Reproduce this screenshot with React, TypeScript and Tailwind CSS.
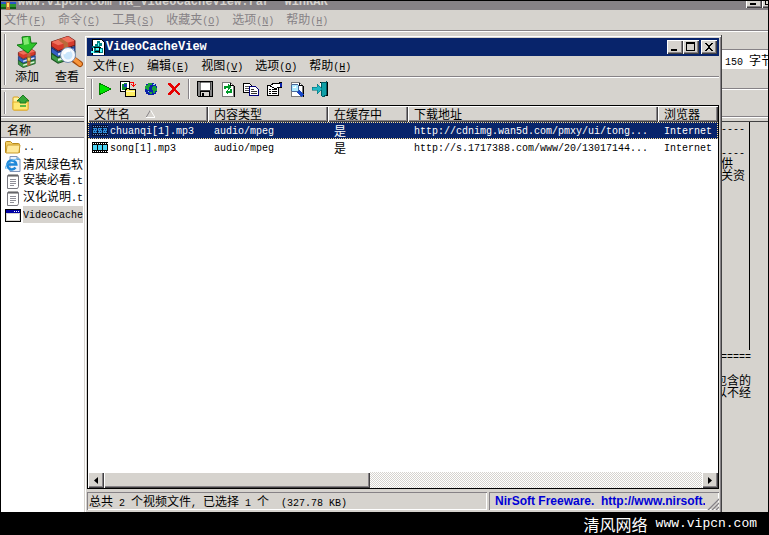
import type { ReactNode } from "react";

const cjk = "font-['Noto_Sans_CJK_SC',sans-serif]";
const mono = "font-['Liberation_Mono',monospace]";

const raised =
  "bg-[#d6d3ce] shadow-[inset_1px_1px_0_#fff,inset_-1px_-1px_0_#424142,inset_-2px_-2px_0_#868286]";
const sunken = "shadow-[inset_1px_1px_0_#868286,inset_-1px_-1px_0_#fff]";

// Latin runs are set half as wide as a Chinese character
function Txt({ children }: { children: string }) {
  const runs = children.match(/[\x00-\x7f]+|[^\x00-\x7f]+/g) ?? [];
  return (
    <span className="whitespace-pre">
      {runs.map((run, i) =>
        run.charCodeAt(0) < 128 ? (
          <span key={i} className={`${mono} text-[10px]`}>
            {run}
          </span>
        ) : (
          <span key={i}>{run}</span>
        )
      )}
    </span>
  );
}

function MenuItem({ label, hotkey }: { label: string; hotkey: string }) {
  return (
    <button className="whitespace-nowrap leading-4">
      {label}
      <span className={`${mono} text-[10px]`}>
        (<u>{hotkey}</u>)
      </span>
    </button>
  );
}

function Icon({ children }: { children: ReactNode }) {
  return (
    <svg className="h-4 w-4 shrink-0" viewBox="0 0 16 16" shapeRendering="crispEdges" aria-hidden="true">
      {children}
    </svg>
  );
}

function AppIcon() {
  return (
    <Icon>
      <path d="M2 0h9l3 3v13H2z" fill="#fff" stroke="#000" />
      <path d="M7 2h3v2h2v3h-2v2h3v5H4V9H2V7h3V5h2z" fill="#008284" />
      <path d="M8 4h1v3H8zM6 9h3v2H6zM10 10h2v3h-2zM1 12h3v2H1z" fill="#5ff" />
      <path d="M4 8h7M9 8v6M5 12h4" stroke="#000" />
    </Icon>
  );
}

function FilmIcon({ selected }: { selected?: boolean }) {
  return (
    <svg className="h-[13px] w-4 shrink-0" viewBox="0 0 16 13" shapeRendering="crispEdges" aria-hidden="true">
      <rect y="1" width="16" height="11" fill={selected ? "#041236" : "#000"} />
      <path d="M1 4h4v5H1zM6 4h4v5H6zM11 4h4v5h-4z" fill={selected ? "#2f8fd8" : "#4ad3f5"} />
      <path d="M1 2.5h15M1 10.5h15" stroke={selected ? "#6f8fd0" : "#fff"} strokeDasharray="1 1" />
      {selected && <path d="M1 5.5h14M2 7.5h13" stroke="#08246b" strokeDasharray="1 1" />}
    </svg>
  );
}

function Books() {
  return (
    <>
      <path d="M3 8L18 3l6 4v4L9 16 3 12z" fill="#d63a2c" stroke="#6f1713" />
      <path d="M3 8L18 3l6 4L9 11z" fill="#f0705c" />
      <path d="M3 13l6 4 15-5v5L9 22l-6-4z" fill="#3560c2" stroke="#1b2f6e" />
      <path d="M9 18l14-4v2L9 20z" fill="#d9e4fb" />
      <path d="M3 18l6 4 15-5v5L9 27l-6-4z" fill="#3e9c46" stroke="#1b5322" />
      <path d="M9 23l14-4v2L9 25z" fill="#e0f3dc" />
      <path d="M12 5l6 4v15l-4 1V10L9 6z" fill="#b9693a" />
      <path d="M14 14h4v5h-4z" fill="#f5cf5c" stroke="#7c5a12" />
    </>
  );
}

function AddIcon() {
  return (
    <svg className="h-8 w-[26px]" viewBox="0 0 26 32" aria-hidden="true">
      <g transform="translate(2 10) scale(.8)">
        <Books />
      </g>
      <path d="M8 1l8-1 1 7h6l-9 10L3 9l6-1z" fill="#2ec52b" stroke="#127a14" />
      <path d="M9 2l5-1 1 7-5 1z" fill="#82ea70" />
    </svg>
  );
}

function ViewIcon() {
  return (
    <svg className="h-8 w-8" viewBox="0 0 32 32" aria-hidden="true">
      <g transform="translate(-3 -3) scale(1.12)">
        <Books />
      </g>
      <path d="M22 23l7 5" stroke="#a34a0c" strokeWidth="6" strokeLinecap="round" />
      <path d="M23 23l6 5" stroke="#f8953a" strokeWidth="4" strokeLinecap="round" />
      <circle cx="17" cy="19" r="6" fill="#c9e5fb" stroke="#f4f8fd" strokeWidth="3" />
      <circle cx="17" cy="19" r="7.5" fill="none" stroke="#7a8fb5" />
      <path d="M13 18q2-4 6-3" stroke="#fff" strokeWidth="2" fill="none" />
    </svg>
  );
}

function UpFolderIcon() {
  return (
    <svg className="h-[18px] w-[18px]" viewBox="0 0 18 18" aria-hidden="true">
      <path d="M1 4q0-1 1-1h4l2 2h7q1 0 1 1v9q0 1-1 1H2q-1 0-1-1z" fill="#fff2a0" stroke="#d8a01c" />
      <path d="M1 8h15v7q0 1-1 1H2q-1 0-1-1z" fill="#ffe873" stroke="#e4b02c" />
      <path d="M11 1l6 6h-3v2H8V7H5z" fill="#35a637" stroke="#1d7a22" />
      <path d="M8 11h6v2H8z" fill="#5bb944" />
    </svg>
  );
}

function FolderIcon() {
  return (
    <svg className="h-4 w-4 shrink-0" viewBox="0 0 16 16" aria-hidden="true">
      <path d="M.5 13.500v-10q0-1 1-1h4l2 2h6q1 0 1 1v8z" fill="#f3cf62" stroke="#b98a1c" />
      <path d="M1 14l1-7q0-1 1-1h12l-1 7q0 1-1 1z" fill="#ffe99a" stroke="#c99b2a" />
    </svg>
  );
}

function WebIcon() {
  return (
    <svg className="h-4 w-4 shrink-0" viewBox="0 0 16 16" aria-hidden="true">
      <path d="M5 .5h7l3 3v12H5z" fill="#eef3fb" stroke="#7d93b8" />
      <path d="M12 .5v3h3" fill="none" stroke="#7d93b8" />
      <path d="M10.500 11.500a4.500 4.500 0 1 1 .8-3H3" fill="none" stroke="#1d86d8" strokeWidth="2.500" />
      <path d="M1 13Q-1 9 7 5t7-1" fill="none" stroke="#4fb0ee" />
    </svg>
  );
}

function NoteIcon() {
  return (
    <svg className="h-4 w-4 shrink-0" viewBox="0 0 16 16" aria-hidden="true">
      <path d="M2.500 2.500h11v11l-1 2h-10z" fill="#fff" stroke="#77777f" />
      <path d="M4 1v3M6 1v3M8 1v3M10 1v3M12 1v3" stroke="#555" />
      <path d="M5 6.500h6M5 8.500h6M5 10.500h6M5 12.500h4" stroke="#8f8f98" />
    </svg>
  );
}

function ExeIcon() {
  return (
    <Icon>
      <path d="M0 2h16v13H0z" fill="#000" />
      <path d="M1 3h14v11H1z" fill="#d6d3ce" />
      <path d="M1 3h14v3H1z" fill="#0000a5" />
      <path d="M2 7h12v6H2z" fill="#fff" />
      <path d="M9 4h1v1H9zM11 4h1v1h-1zM13 4h1v1h-1z" fill="#fff" />
    </Icon>
  );
}

const page = (
  <>
    <path d="M2.500 1.500h8l3 3v11h-11z" fill="#fff" stroke="#7b7b7b" />
    <path d="M10.500 1.500v3h3M14 5v11H3" fill="none" stroke="#000" />
  </>
);

const primaryTools = [
  { name: "播放", art: <path d="M2.500 2.500v11L14 8z" fill="#00e300" stroke="#008200" /> },
  {
    name: "复制文件",
    art: (
      <>
        <path d="M.5.5h9v10h-9z" fill="#fff" stroke="#000" />
        <path d="M2 3h2V2h3v6H5v1H2z" fill="#108a30" />
        <path d="M4 3h3v3H4z" fill="#1738b8" />
        <path d="M10 1.500h3.500V5M11.500 3.500l2 2 2-2" fill="none" stroke="#f00" />
        <path d="M5.500 8.500h1v-1h3v1h6v7h-10z" fill="#ffef63" stroke="#000" />
        <path d="M6 10.500h9" stroke="#fffbc4" />
      </>
    ),
  },
  {
    name: "浏览器",
    art: (
      <>
        <circle cx="8" cy="8" r="6.500" fill="#0a22a8" />
        <path d="M3 4h2V2h4v2H7v2H6v3H4V8H2V5zM10 5h3v2h1v3h-2v2h-2V9H9V6zM6 11h3v2H7z" fill="#18a53a" />
        <path d="M10 3h2v1h-2zM5 10h1v1H5z" fill="#8fd4ff" />
      </>
    ),
  },
  {
    name: "删除",
    art: <path d="M2 2l3 0 3 4 4-4 2 0v1L9.500 8 14 13v1h-2L8 10l-4 4H2v-1l4-5-4-5z" fill="#e60000" />,
  },
];

const secondaryTools = [
  {
    name: "保存",
    art: (
      <>
        <path d="M.5.5h15v15h-14l-1-1z" fill="#848484" stroke="#000" />
        <path d="M3 1h10v8H3z" fill="#fff" stroke="#000" strokeWidth=".5" />
        <path d="M3.500 10.500h9v5h-9z" fill="#d6d3ce" stroke="#000" />
        <path d="M5 12h2v3H5z" fill="#000" />
      </>
    ),
  },
  {
    name: "刷新",
    art: (
      <>
        {page}
        <path d="M4 8V5h4V3l3 3-3 3V7H6v1z" fill="#009a29" />
        <path d="M12 8v4H8v2l-3-3 3-3v2h2V8z" fill="#009a29" />
      </>
    ),
  },
  {
    name: "复制",
    art: (
      <>
        <path d="M.5 2.500h6l2 2v7h-8z" fill="#fff" stroke="#000" />
        <path d="M2 5.500h4M2 7.500h5M2 9.500h5" stroke="#555" />
        <path d="M6.500 5.500h6l3 3v6h-9z" fill="#fff" stroke="#00007b" />
        <path d="M8 8.500h3M8 10.500h6M8 12.500h6" stroke="#333" />
      </>
    ),
  },
  {
    name: "属性",
    art: (
      <>
        <path d="M1.500 4.500h11v10h-11z" fill="#fff" stroke="#000" />
        <path d="M3 8.500h2M6 8.500h5M3 10.500h2M6 10.500h5M3 12.500h2M6 12.500h5" stroke="#000" />
        <path d="M4 5l4-3h5v-1h3v5h-3l-2 1H8z" fill="#fff" stroke="#000" />
        <path d="M14 2h2v4h-2z" fill="#0a22a8" />
      </>
    ),
  },
  {
    name: "查找",
    art: (
      <>
        {page}
        <path d="M8 9l6 6" stroke="#1747c8" strokeWidth="3" />
        <circle cx="6" cy="7" r="4" fill="#aeeaff" stroke="#4a6a9c" />
        <path d="M4 6h2v-1" stroke="#fff" fill="none" />
      </>
    ),
  },
  {
    name: "退出",
    art: (
      <>
        <path d="M7.500 1.500h8v13h-4" fill="#fff" stroke="#000" />
        <path d="M9 2l5-1v13l-3 2-2-2z" fill="#0fa0a8" stroke="#005a63" />
        <path d="M0 6h5V3l5 5-5 5V9H0z" fill="#1fb7c4" stroke="#00636b" strokeWidth=".5" />
      </>
    ),
  },
];

function ToolGroup({ tools }: { tools: { name: string; art: ReactNode }[] }) {
  return (
    <div className="flex">
      {tools.map((t) => (
        <button key={t.name} aria-label={t.name} className="flex h-[22px] w-[23px] items-center justify-center">
          <Icon>{t.art}</Icon>
        </button>
      ))}
    </div>
  );
}

function Grip({ className }: { className: string }) {
  return <div className={`w-0.5 shrink-0 border-l border-[#868286] bg-white ${className}`} />;
}

function Rule() {
  return <div className="h-0.5 shrink-0 border-t border-[#868286] bg-white" />;
}

function CaptionButton({ label, children }: { label: string; children: ReactNode }) {
  return (
    <button aria-label={label} className={`flex h-[14px] w-4 items-center justify-center ${raised}`}>
      <svg className="h-[10px] w-[10px]" viewBox="0 0 10 10" shapeRendering="crispEdges">
        {children}
      </svg>
    </button>
  );
}

const minimize = <path d="M1 7h6v2H1z" />;
const maximize = <path d="M0 0h9v9H0zM1 2v6h7V2z" fillRule="evenodd" />;

const archiveFiles = [
  { name: "..", icon: <FolderIcon /> },
  { name: "清风绿色软", icon: <WebIcon /> },
  { name: "安装必看.t", icon: <NoteIcon /> },
  { name: "汉化说明.t", icon: <NoteIcon /> },
  { name: "VideoCache", icon: <ExeIcon />, selected: true },
];

const commentTop = ["-----", "", "-----", " 供", " 关资"];
const commentBottom = ["======", "", "包含的", "以不经"];

function CommentLines({ lines }: { lines: string[] }) {
  return (
    <>
      {lines.map((line, i) => (
        <p key={i} className="flex h-3 items-center leading-3">
          <Txt>{line}</Txt>
        </p>
      ))}
    </>
  );
}

function ArchiveWindow() {
  return (
    <section className="flex h-full flex-col overflow-hidden border-x border-t border-black bg-[#d6d3ce]">
      <header className="flex h-[9px] shrink-0 items-end justify-between overflow-hidden bg-[#868286]">
        <div className="flex items-end">
          <svg className="h-2 w-[15px]" viewBox="0 0 15 8" shapeRendering="crispEdges" aria-hidden="true">
            <path d="M0 0h15v2H0z" fill="#2a55c8" />
            <path d="M0 2h15v5H0z" fill="#299a31" />
            <path d="M0 5h15v2H0z" fill="#145a1a" />
            <path d="M5 0h4v8H5z" fill="#c0703a" />
            <path d="M6 1h2v4H6z" fill="#ffdf63" />
          </svg>
          <h1 className={`${mono} whitespace-pre pb-0.5 pl-0.5 text-xs leading-3 font-bold text-[#d6d3ce]`}>
            www.vipcn.com na_VideoCacheView.rar  WinRAR
          </h1>
        </div>
        <div className="flex w-[22px] shrink-0 items-end overflow-hidden pb-0.5">
          <div className="flex shrink-0">
            <CaptionButton label="最小化">{minimize}</CaptionButton>
            <CaptionButton label="最大化">{maximize}</CaptionButton>
          </div>
        </div>
      </header>
      <nav className="flex h-5 shrink-0 items-center gap-3 px-[3px] text-[#868286]">
        <MenuItem label="文件" hotkey="F" />
        <MenuItem label="命令" hotkey="C" />
        <MenuItem label="工具" hotkey="S" />
        <MenuItem label="收藏夹" hotkey="O" />
        <MenuItem label="选项" hotkey="N" />
        <MenuItem label="帮助" hotkey="H" />
      </nav>
      <Rule />
      <div className="flex h-14 shrink-0 items-start justify-between">
        <div className="flex pt-0.5 pl-[3px]">
          <Grip className="h-[51px]" />
          <button className="flex w-[42px] flex-col items-center pt-0.5">
            <AddIcon />
            <span className="leading-4">添加</span>
          </button>
          <button className="flex w-[38px] flex-col items-center pt-0.5">
            <ViewIcon />
            <span className="leading-4">查看</span>
          </button>
        </div>
        <div className="mt-[17px] h-5 w-[52px] overflow-hidden border-t border-[#868286] bg-white pl-[9px] leading-5">
          <Txt>150 字节</Txt>
        </div>
      </div>
      <Rule />
      <div className="flex h-[26px] shrink-0 items-center pl-[3px]">
        <Grip className="h-[22px]" />
        <button aria-label="向上" className="ml-1.5">
          <UpFolderIcon />
        </button>
      </div>
      <Rule />
      <div className="mt-[3px] flex min-h-0 flex-1 justify-between border-t border-[#424142]">
        <div className="w-[83px] bg-white">
          <div className="h-4 border-b border-[#868286] bg-[#d6d3ce] pl-1.5 leading-4">名称</div>
          <ul className="pr-px">
            {archiveFiles.map((f) => (
              <li key={f.name} className="flex h-[17px] items-center gap-0.5 overflow-hidden pl-1">
                {f.icon}
                <span
                  className={`flex h-full flex-1 items-center overflow-hidden leading-4 ${f.selected ? "bg-[#d6d3ce]" : ""}`}
                >
                  <Txt>{f.name}</Txt>
                </span>
              </li>
            ))}
          </ul>
        </div>
        <div className="w-[53px]">
          <div className="h-[228px] w-[35px] border-r border-black">
            <CommentLines lines={commentTop} />
          </div>
          <CommentLines lines={commentBottom} />
        </div>
      </div>
    </section>
  );
}

const columns = [
  { title: "文件名", sorted: true },
  { title: "内容类型" },
  { title: "在缓存中" },
  { title: "下载地址" },
  { title: "浏览器" },
];

const cacheFiles = [
  ["chuanqi[1].mp3", "audio/mpeg", "是", "http://cdnimg.wan5d.com/pmxy/ui/tong...", "Internet"],
  ["song[1].mp3", "audio/mpeg", "是", "http://s.1717388.com/www/20/13017144...", "Internet"],
];

function CacheTable() {
  return (
    <table className="w-full table-fixed border-collapse text-left">
      <colgroup>
        <col className="w-[120px]" />
        <col className="w-[120px]" />
        <col className="w-[80px]" />
        <col className="w-[250px]" />
        <col />
      </colgroup>
      <thead>
        <tr>
          {columns.map((c) => (
            <th key={c.title} className={`h-4 p-0 pl-1.5 font-normal leading-4 ${raised}`}>
              <span className="flex items-center gap-4 whitespace-nowrap">
                {c.title}
                {c.sorted && (
                  <svg className="h-2 w-[9px]" viewBox="0 0 9 8" aria-hidden="true">
                    <path d="M4.500 0L0 7.500" stroke="#868286" />
                    <path d="M4.500 0L9 7.500H0" stroke="#fff" fill="none" />
                  </svg>
                )}
              </span>
            </th>
          ))}
        </tr>
      </thead>
      <tbody>
        {cacheFiles.map((row, r) => (
          <tr
            key={row[0]}
            className={r === 0 ? "bg-[#08246b] text-white outline-1 -outline-offset-1 outline-dotted outline-[#f7db94]" : ""}
          >
            {row.map((cell, i) => (
              <td key={i} className={`p-0 leading-4 ${i === 0 ? "pl-1" : "pl-1.5"}`}>
                <span className="flex h-[17px] items-center gap-0.5 overflow-hidden">
                  {i === 0 && <FilmIcon selected={r === 0} />}
                  <Txt>{cell}</Txt>
                </span>
              </td>
            ))}
          </tr>
        ))}
      </tbody>
    </table>
  );
}

function CacheViewWindow() {
  return (
    <section className="absolute top-[35px] right-[47px] bottom-0 left-[84px] flex flex-col border-r border-[#424142] bg-[#d6d3ce] py-[3px] pr-0.5 pb-0.5 pl-[3px] shadow-[inset_1px_1px_0_#d6d3ce,inset_2px_2px_0_#fff,inset_-1px_0_0_#868286]">
      <header className="flex h-[18px] shrink-0 items-center justify-between bg-[#08246b] pr-0.5 pl-[3px]">
        <div className="flex items-center">
          <AppIcon />
          <h2 className={`${mono} text-xs leading-4 font-bold text-white`}>VideoCacheView</h2>
        </div>
        <div className="flex">
          <CaptionButton label="最小化">{minimize}</CaptionButton>
          <CaptionButton label="最大化">{maximize}</CaptionButton>
          <div className="ml-0.5 flex">
            <CaptionButton label="关闭">
              <path d="M1 1h2v1h1v1h2V2h1V1h2v1H8v1H7v1H6v2h1v1h1v1h1v1H7V8H6V7H4v1H3v1H1V8h1V7h1V6h1V4H3V3H2V2H1z" />
            </CaptionButton>
          </div>
        </div>
      </header>
      <nav className="flex h-5 shrink-0 items-center gap-3 pl-1.5">
        <MenuItem label="文件" hotkey="F" />
        <MenuItem label="编辑" hotkey="E" />
        <MenuItem label="视图" hotkey="V" />
        <MenuItem label="选项" hotkey="O" />
        <MenuItem label="帮助" hotkey="H" />
      </nav>
      <Rule />
      <div className="flex h-[26px] shrink-0 items-center pb-1 pl-1">
        <Grip className="h-5" />
        <ToolGroup tools={primaryTools} />
        <div className="flex w-2 justify-center">
          <Grip className="h-5" />
        </div>
        <ToolGroup tools={secondaryTools} />
      </div>
      <div className="mt-px flex min-h-0 flex-1 flex-col border border-black bg-white">
        <div className="min-h-0 flex-1 overflow-hidden">
          <CacheTable />
        </div>
        <div className="flex h-4 shrink-0 bg-[#d6d3ce] bg-[repeating-conic-gradient(#fff_0_25%,#d6d3ce_0_50%)] bg-[length:2px_2px]">
          <button aria-label="向左滚动" className={`flex w-4 items-center justify-center ${raised}`}>
            <svg className="h-[7px] w-1" viewBox="0 0 4 7">
              <path d="M4 0v7L0 3.500z" />
            </svg>
          </button>
          <div className="flex flex-1">
            <div className={`w-[44.4%] ${raised}`} />
          </div>
          <button aria-label="向右滚动" className={`flex w-4 items-center justify-center ${raised}`}>
            <svg className="h-[7px] w-1" viewBox="0 0 4 7">
              <path d="M0 0v7l4-3.500z" />
            </svg>
          </button>
        </div>
      </div>
      <footer className="mt-[3px] flex h-[18px] shrink-0 gap-0.5">
        <div className={`flex-1 overflow-hidden pl-0.5 leading-[18px] ${sunken}`}>
          <Txt>{"总共 2 个视频文件, 已选择 1 个  (327.78 KB)"}</Txt>
        </div>
        <div className={`flex w-[230px] items-center justify-between pl-1.5 ${sunken}`}>
          <a
            href="http://www.nirsoft.net"
            className="w-[210px] overflow-hidden whitespace-pre font-['Liberation_Sans',sans-serif] text-xs leading-4 font-bold text-[#0000d6]"
          >
            {"NirSoft Freeware.  http://www.nirsoft.net"}
          </a>
          <svg className="h-3 w-3 self-end" viewBox="0 0 12 12" aria-hidden="true">
            <path d="M0 12L12 0M4 12l8-8M8 12l4-4" stroke="#fff" />
            <path d="M1 12L12 1M5 12l7-7M9 12l3-3" stroke="#868286" strokeWidth="1.500" />
          </svg>
        </div>
      </footer>
    </section>
  );
}

export default function App() {
  return (
    <div className={`flex h-screen flex-col bg-black text-xs text-black ${cjk}`}>
      <main className="relative min-h-0 flex-1">
        <ArchiveWindow />
        <CacheViewWindow />
      </main>
      <footer className="flex h-[23px] shrink-0 items-center justify-end gap-2 pr-3 text-white">
        <span className="text-base leading-5">清风网络</span>
        <span className={`${mono} text-[13px] leading-5`}>www.vipcn.com</span>
      </footer>
    </div>
  );
}
